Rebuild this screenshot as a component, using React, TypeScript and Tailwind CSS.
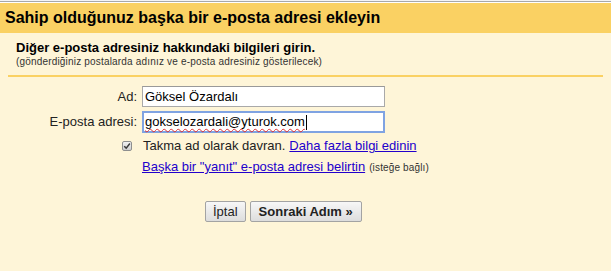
import React from 'react';

function CheckMark() {
  return (
    <span className="flex h-[10px] w-[10px] items-center justify-center rounded-[2px] border border-[#8e8f8f] bg-gradient-to-b from-[#f2f2f2] to-[#cfcfcf]">
      <svg viewBox="0 0 10 10" className="h-[8px] w-[8px]">
        <path d="M1.5 5.2 L4 7.6 L8.6 1.8" fill="none" stroke="#3a3a3a" strokeWidth="1.8" />
      </svg>
    </span>
  );
}

export default function App() {
  return (
    <div className="h-[271px] w-[611px] overflow-hidden bg-[#fef5d8] font-['Liberation_Sans',Arial,sans-serif] text-black">
      <div className="h-px bg-[#f4f4f4]" />
      <div className="h-px bg-[#a8a8a8]" />
      <div className="h-px bg-white" />
      <div className="flex h-[30px] items-center bg-[#fad163] pl-[5px] text-[16px] font-bold">
        Sahip olduğunuz başka bir e-posta adresi ekleyin
      </div>

      <div className="mx-[8px] border-b-2 border-[#fad163] pb-[7px] pl-[8px] pt-[7px]">
        <div className="text-[13px] font-bold leading-[16px]">Diğer e-posta adresiniz hakkındaki bilgileri girin.</div>
        <div className="text-[10px] leading-[12px] tracking-[0.18px] text-[#333]">
          (gönderdiğiniz postalarda adınız ve e-posta adresiniz gösterilecek)
        </div>
      </div>

      <div className="mt-[9px] grid grid-cols-[137px_243px] gap-x-[5px] text-[13px]">
        <div className="flex h-[21px] items-center justify-end text-[#222]">Ad:</div>
        <div className="flex h-[21px] items-center border border-[#a9a9a9] border-t-[#999] bg-white pl-[2px]">
          Göksel Özardalı
        </div>

        <div className="mt-[4px] flex h-[21px] items-center justify-end text-[#222]">E-posta adresi:</div>
        <div className="mt-[4px] flex h-[22px] items-center border-2 border-[#7fa3e2] bg-white pl-[1px]">
          <span className="underline decoration-[#e03030] decoration-wavy decoration-1 underline-offset-2">
            gokselozardali@yturok.com
          </span>
          <span className="ml-px h-[15px] w-px bg-black" />
        </div>

        <div className="mt-[5px] flex h-[16px] items-center justify-end pr-[5px]">
          <CheckMark />
        </div>
        <div className="mt-[5px] flex h-[16px] items-center whitespace-nowrap text-[#222]">
          <span className="ml-px">Takma ad olarak davran.</span>
          <a className="ml-[4px] text-[#2200cc] underline" href="#">
            Daha fazla bilgi edinin
          </a>
        </div>

        <div />
        <div className="mt-[5px] flex h-[16px] items-center whitespace-nowrap">
          <a className="text-[#2200cc] underline" href="#">
            Başka bir "yanıt" e-posta adresi belirtin
          </a>
          <span className="ml-[4px] text-[10px] tracking-[0.15px] text-[#333]">(isteğe bağlı)</span>
        </div>
      </div>

      <div className="mt-[26px] flex gap-[4px] pl-[205px]">
        <button className="h-[21px] rounded-[2px] border border-[#a3a3a3] bg-gradient-to-b from-[#f7f7f7] to-[#dddddd] px-[7px] text-[13px] text-[#222]">
          İptal
        </button>
        <button className="h-[21px] rounded-[2px] border border-[#a3a3a3] bg-gradient-to-b from-[#f7f7f7] to-[#dddddd] px-[8px] text-[13px] font-bold text-[#222]">
          Sonraki Adım »
        </button>
      </div>
    </div>
  );
}
